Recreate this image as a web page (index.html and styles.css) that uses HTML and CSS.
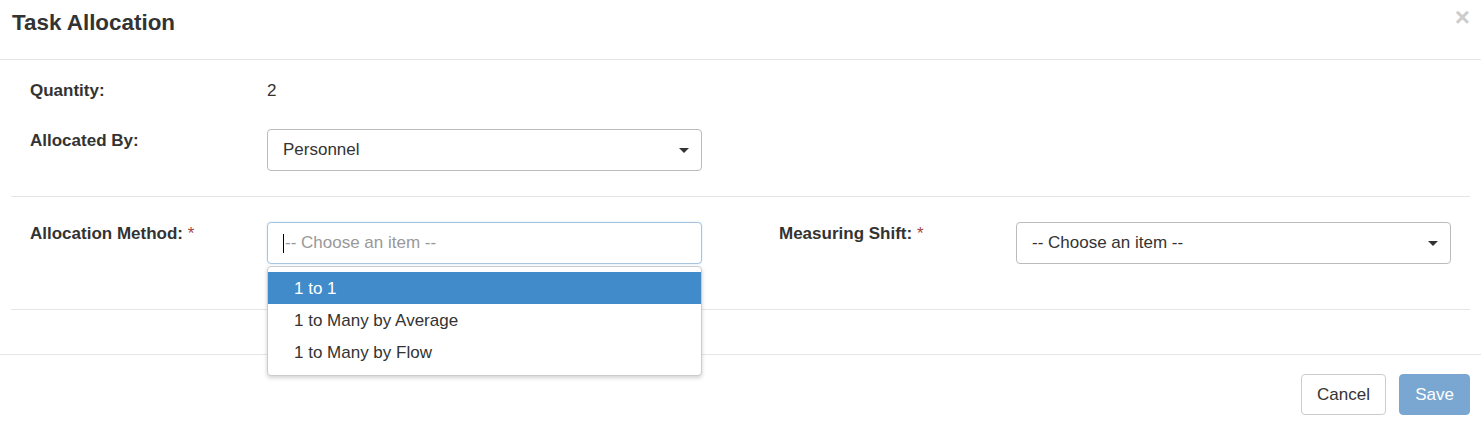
FILE: index.html
```html
<!DOCTYPE html>
<html>
<head>
<meta charset="utf-8">
<link rel="stylesheet" href="styles.css">
</head>
<body>
<div class="modal">
  <div class="modal-header">
    <h4 class="modal-title">Task Allocation</h4>
    <span class="close">×</span>
  </div>
  <div class="modal-body">
    <div class="section">
      <div class="row row-qty">
        <div class="half">
          <div class="label">Quantity:</div>
          <div class="value">2</div>
        </div>
      </div>
      <div class="row">
        <div class="half">
          <div class="label">Allocated By:</div>
          <div class="control">
            <div class="select"><span class="sel-text">Personnel</span><span class="caret"></span></div>
          </div>
        </div>
      </div>
    </div>
    <div class="section section-2">
      <div class="row">
        <div class="half">
          <div class="label">Allocation Method: <span class="req">*</span></div>
          <div class="control">
            <div class="select focused"><span class="cursor"></span><span class="placeholder">-- Choose an item --</span></div>
            <ul class="dropdown">
              <li class="active">1 to 1</li>
              <li>1 to Many by Average</li>
              <li>1 to Many by Flow</li>
            </ul>
          </div>
        </div>
        <div class="half">
          <div class="label">Measuring Shift: <span class="req">*</span></div>
          <div class="control">
            <div class="select"><span class="sel-text">-- Choose an item --</span><span class="caret"></span></div>
          </div>
        </div>
      </div>
    </div>
  </div>
  <div class="modal-footer">
    <button class="btn btn-default">Cancel</button>
    <button class="btn btn-primary">Save</button>
  </div>
</div>
</body>
</html>
```
FILE: styles.css
```css
* { box-sizing: border-box; }
html, body { margin: 0; padding: 0; background: #fff; }
body {
  font-family: "Liberation Sans", Arial, sans-serif;
  font-size: 17px;
  color: #333;
  width: 1481px;
}
.modal { width: 1481px; }
.modal-header {
  height: 60px;
  border-bottom: 1px solid #e5e5e5;
  padding: 11px 12px 0 12px;
  display: flex;
  justify-content: space-between;
  align-items: flex-start;
}
.modal-title {
  margin: 0;
  font-size: 22.4px;
  line-height: 24px;
  font-weight: bold;
  color: #333;
}
.close {
  font-size: 26px;
  font-weight: bold;
  line-height: 16px;
  color: #ccc;
  margin-top: -2px;
  margin-right: -1px;
}
.modal-body { padding: 0 11px; }
.section { border-bottom: 1px solid #e5e5e5; }
.section:first-child { padding-top: 19px; height: 137px; }
.section-2 { padding-top: 25px; height: 113px; }
.row { display: flex; padding-left: 19px; }
.row-qty { height: 50px; }
.half { display: flex; width: 749px; flex-shrink: 0; }
.half + .half { width: 672px; }
.label {
  width: 237px;
  font-weight: bold;
  line-height: 24px;
  flex-shrink: 0;
}
.value { line-height: 24px; }
.req { color: #a94442; font-weight: normal; }
.control { position: relative; width: 435px; flex-shrink: 0; }
.select {
  height: 42px;
  border: 1px solid #bbb;
  border-radius: 4px;
  padding: 0 15px;
  display: flex;
  align-items: center;
  position: relative;
  background: #fff;
}
.select.focused { border-color: #a9c4e0; box-shadow: 0 0 2px rgba(102,175,233,.35); }
.sel-text { color: #333; line-height: 24px; }
.placeholder { color: #999; line-height: 24px; margin-left: 1px; }
.cursor {
  width: 1px; height: 19px; background: #000;
  display: inline-block;
}
.caret {
  position: absolute;
  right: 12px;
  top: 18px;
  width: 0; height: 0;
  border-left: 5px solid transparent;
  border-right: 5px solid transparent;
  border-top: 5px solid #333;
}
.dropdown {
  position: absolute;
  left: 0;
  top: 44px;
  width: 435px;
  margin: 0;
  padding: 5px 0 7px 0;
  list-style: none;
  background: #fff;
  border: 1px solid #ccc;
  border-radius: 4px;
  box-shadow: 0 2px 4px rgba(0,0,0,.18);
  z-index: 10;
}
.dropdown li {
  height: 32px;
  line-height: 33px;
  padding-left: 26px;
  color: #333;
}
.dropdown li.active { background: #428bca; color: #fff; }
.modal-footer {
  margin-top: 44px;
  border-top: 1px solid #e5e5e5;
  padding: 19px 11px 0 0;
  display: flex;
  justify-content: flex-end;
  gap: 13px;
}
.btn {
  font-family: "Liberation Sans", Arial, sans-serif;
  font-size: 17px;
  height: 41px;
  border-radius: 4px;
  border: 1px solid #ccc;
  padding: 0 12px;
  line-height: 24px;
}
.btn-default { background: #fff; color: #333; width: 85px; }
.btn-primary { background: #7aa7d1; border-color: #7aa7d1; color: #fff; width: 71px; }
```
